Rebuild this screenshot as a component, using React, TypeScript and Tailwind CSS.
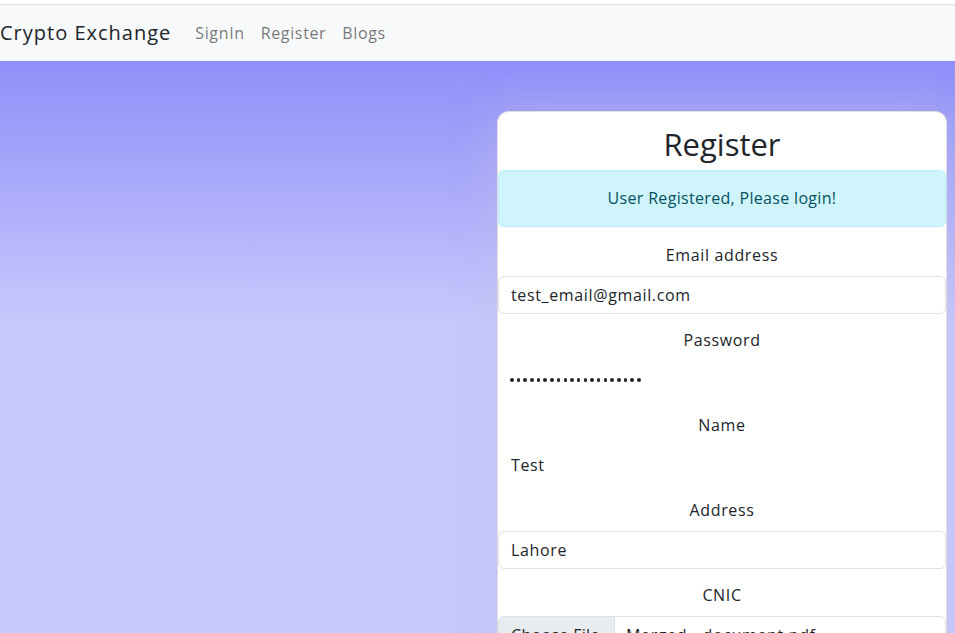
import React from 'react';

const navLinks = ['SignIn', 'Register', 'Blogs'];

const Field: React.FC<{ label: string; children: React.ReactNode }> = ({ label, children }) => (
  <div className="mb-[14px]">
    <label className="block text-center leading-6 mb-[9px] text-[#212529]">{label}</label>
    {children}
  </div>
);

const TextBox: React.FC<{ value: string; bordered?: boolean }> = ({ value, bordered = true }) => (
  <div
    className={`h-[38px] flex items-center px-3 rounded-md border text-[#212529] ${
      bordered ? 'border-[#dee2e6] bg-white' : 'border-transparent'
    }`}
  >
    {value}
  </div>
);

export default function App() {
  return (
    <div className="min-h-screen bg-white pt-1 font-['Open_Sans',sans-serif] text-base tracking-[0.04em]">
      {/* Navbar */}
      <nav className="h-[57px] border-t border-[#dee2e6] bg-[#f8f9fa] flex items-center">
        <a className="text-[20px] text-[#212529] mr-4 tracking-[0.05em]">Crypto Exchange</a>
        <ul className="flex">
          {navLinks.map((link) => (
            <li key={link}>
              <a className="px-2 text-[rgba(0,0,0,0.55)]">{link}</a>
            </li>
          ))}
        </ul>
      </nav>

      {/* Body */}
      <main className="min-h-[572px] bg-[linear-gradient(180deg,#8f8ff9_0px,#c8c8fd_262px)] flex justify-end pt-[50px] pr-2">
        <div className="w-[450px] self-start bg-white rounded-xl border border-[rgba(0,0,0,0.12)] shadow-[0_0_40px_rgba(190,190,230,0.5)]">
          <h2 className="text-center text-[31px] leading-[1.2] text-[#212529] tracking-normal pt-[14px] mb-[7px]">
            Register
          </h2>

          <div className="border border-[#b6effb] bg-[#cff4fc] text-[#055160] rounded-md py-[15px] text-center leading-[25px] mb-4 tracking-[0.02em]">
            User Registered, Please login!
          </div>

          <Field label="Email address">
            <TextBox value="test_email@gmail.com" />
          </Field>

          <Field label="Password">
            <div className="h-[38px] flex items-center gap-[3.2px] px-3">
              {Array.from({ length: 20 }).map((_, i) => (
                <span key={i} className="w-[3.5px] h-[3.5px] rounded-full bg-[#212529]" />
              ))}
            </div>
          </Field>

          <Field label="Name">
            <TextBox value="Test" bordered={false} />
          </Field>

          <Field label="Address">
            <TextBox value="Lahore" />
          </Field>

          <Field label="CNIC">
            <div className="h-[38px] flex rounded-md border border-[#dee2e6] overflow-hidden text-[#212529] whitespace-nowrap">
              <div className="w-[116px] shrink-0 bg-[#e9ecef] border-r border-[#dee2e6] flex items-center px-3 tracking-[0.02em]">
                Choose File
              </div>
              <div className="flex items-center pl-[11px]">Merged - document.pdf</div>
            </div>
          </Field>

          <div className="flex justify-center pb-6">
            <button className="bg-[#0d6efd] text-white rounded-md px-3 py-1.5">Register</button>
          </div>
        </div>
      </main>
    </div>
  );
}
